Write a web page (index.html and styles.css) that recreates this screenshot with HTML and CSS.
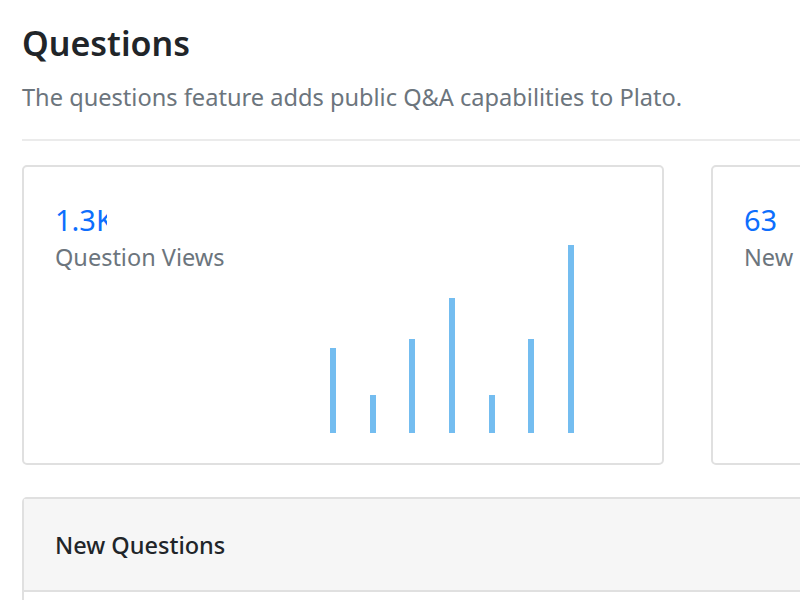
FILE: index.html
```html
<!DOCTYPE html>
<html>
<head>
<meta charset="utf-8">
<link rel="stylesheet" href="styles.css">
</head>
<body>
<div class="page">
  <header class="page-header">
    <h1 class="title">Questions</h1>
    <p class="lead">The questions feature adds public Q&amp;A capabilities to Plato.</p>
  </header>
  <div class="stats">
    <div class="card stat-card">
      <div class="stat">
        <div class="stat-value stat-value--clip">1.3K</div>
        <div class="stat-label">Question Views</div>
      </div>
      <div class="bars">
        <div class="bar" style="height:85px"></div>
        <div class="bar" style="height:38px"></div>
        <div class="bar" style="height:94px"></div>
        <div class="bar" style="height:135px"></div>
        <div class="bar" style="height:38px"></div>
        <div class="bar" style="height:94px"></div>
        <div class="bar" style="height:188px"></div>
      </div>
    </div>
    <div class="card stat-card">
      <div class="stat">
        <div class="stat-value">63</div>
        <div class="stat-label">New Questions</div>
      </div>
    </div>
  </div>
  <div class="card list-card">
    <div class="list-header">New Questions</div>
    <div class="list-body"></div>
  </div>
</div>
</body>
</html>
```
FILE: styles.css
```css
html, body {
  margin: 0;
  padding: 0;
  background: #fff;
  overflow: hidden;
}
body {
  font-family: "Noto Sans", "Open Sans", sans-serif;
  color: #212529;
}
.page {
  width: 1400px;
  padding: 0 22px;
}
.page-header {
  padding-top: 23px;
  padding-bottom: 25px;
  border-bottom: 2px solid #ebebeb;
}
.title {
  margin: 0;
  font-size: 34px;
  font-weight: 600;
  line-height: 40px;
}
.lead {
  margin: 17px 0 0;
  font-size: 23.6px;
  line-height: 34px;
  color: #6c757d;
}
.stats {
  display: grid;
  grid-template-columns: 642px 642px;
  gap: 47px;
  margin-top: 24px;
}
.card {
  border: 2px solid #e0e0e0;
  border-radius: 5px;
  background: #fff;
}
.stat-card {
  height: 300px;
  display: flex;
  align-items: flex-start;
  padding: 35px 31px 30px;
  box-sizing: border-box;
}
.stat {
  flex: 1;
}
.stat-value {
  white-space: nowrap;
  font-size: 29px;
  line-height: 36px;
  color: #0d6efd;
}
.stat-value--clip {
  width: 52px;
  overflow: hidden;
}
.stat-label {
  margin-top: 4px;
  font-size: 23.5px;
  line-height: 30px;
  color: #6c757d;
  white-space: nowrap;
}
.bars {
  align-self: flex-end;
  display: flex;
  align-items: flex-end;
  gap: 33.67px;
  margin-right: 57px;
}
.bar {
  width: 6px;
  background: #74bdf0;
}
.list-card {
  margin-top: 32px;
  width: 1300px;
}
.list-header {
  background: #f6f6f6;
  border-bottom: 2px solid #e0e0e0;
  padding: 0 31px;
  height: 91px;
  display: flex;
  align-items: center;
  font-size: 23.5px;
  font-weight: 500;
}
.list-body {
  height: 200px;
}
```
